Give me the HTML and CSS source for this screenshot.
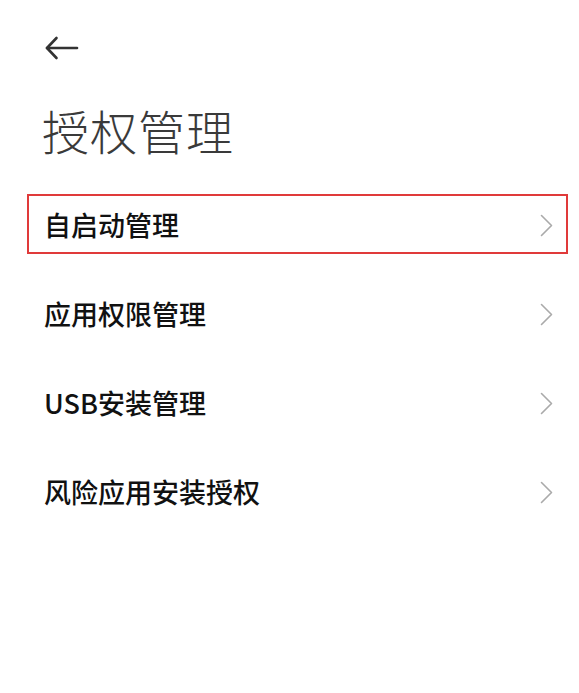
FILE: index.html
```html
<!DOCTYPE html>
<html lang="zh-CN">
<head>
  <meta charset="UTF-8">
  <meta name="viewport" content="width=device-width, initial-scale=1.0">
  <title>授权管理</title>
  <link rel="stylesheet" href="styles.css">
</head>
<body>
  <div class="page">
    <div class="top-bar">
      <button class="back-btn" aria-label="返回">
        <svg width="34" height="24" viewBox="0 0 34 24" fill="none" stroke="#333" stroke-width="2.6" stroke-linecap="round" stroke-linejoin="round">
          <path d="M2 12H32"/>
          <path d="M11.5 2L2 12L11.5 22"/>
        </svg>
      </button>
    </div>

    <h1 class="title">授权管理</h1>

    <ul class="menu">
      <li class="menu-item selected">
        <span class="label">自启动管理</span>
        <svg class="chevron" width="13" height="23" viewBox="0 0 13 23"><path d="M1.5 1.5L11.5 11.5L1.5 21.5"/></svg>
      </li>
      <li class="menu-item">
        <span class="label">应用权限管理</span>
        <svg class="chevron" width="13" height="23" viewBox="0 0 13 23"><path d="M1.5 1.5L11.5 11.5L1.5 21.5"/></svg>
      </li>
      <li class="menu-item">
        <span class="label">USB安装管理</span>
        <svg class="chevron" width="13" height="23" viewBox="0 0 13 23"><path d="M1.5 1.5L11.5 11.5L1.5 21.5"/></svg>
      </li>
      <li class="menu-item">
        <span class="label">风险应用安装授权</span>
        <svg class="chevron" width="13" height="23" viewBox="0 0 13 23"><path d="M1.5 1.5L11.5 11.5L1.5 21.5"/></svg>
      </li>
    </ul>
  </div>
</body>
</html>
```

FILE: styles.css
```css
body {
  margin: 0;
  padding: 0;
  background-color: #ffffff;
  font-family: "Noto Sans CJK SC", "Noto Sans", sans-serif;
  color: #111111;
}

.page {
  width: 579px;
  height: 693px;
  overflow: hidden;
}

.top-bar {
  padding: 36px 0 0 45px;
  height: 28px;
}

.back-btn {
  border: none;
  background: none;
  padding: 0;
  margin: 0;
  display: block;
  cursor: pointer;
}

.back-btn svg {
  display: block;
}

.title {
  margin: 38px 0 0 42px;
  font-size: 47px;
  line-height: 56px;
  font-weight: 300;
  letter-spacing: 1px;
  color: #3a3a3a;
}

.menu {
  list-style: none;
  margin: 36px 11px 0 27px;
  padding: 0;
}

.menu-item {
  display: flex;
  align-items: center;
  justify-content: space-between;
  height: 56px;
  padding: 0 13px 0 15px;
  margin-bottom: 29px;
  border: 2px solid transparent;
  cursor: pointer;
}

.menu-item.selected {
  border-color: #e03a3a;
}

.label {
  font-size: 27px;
  font-weight: 500;
  color: #111111;
  padding-top: 1px;
}

.chevron {
  display: block;
  fill: none;
  stroke: #aaaaaa;
  stroke-width: 1.6;
  stroke-linecap: round;
  stroke-linejoin: round;
  margin-top: 2px;
}
```
